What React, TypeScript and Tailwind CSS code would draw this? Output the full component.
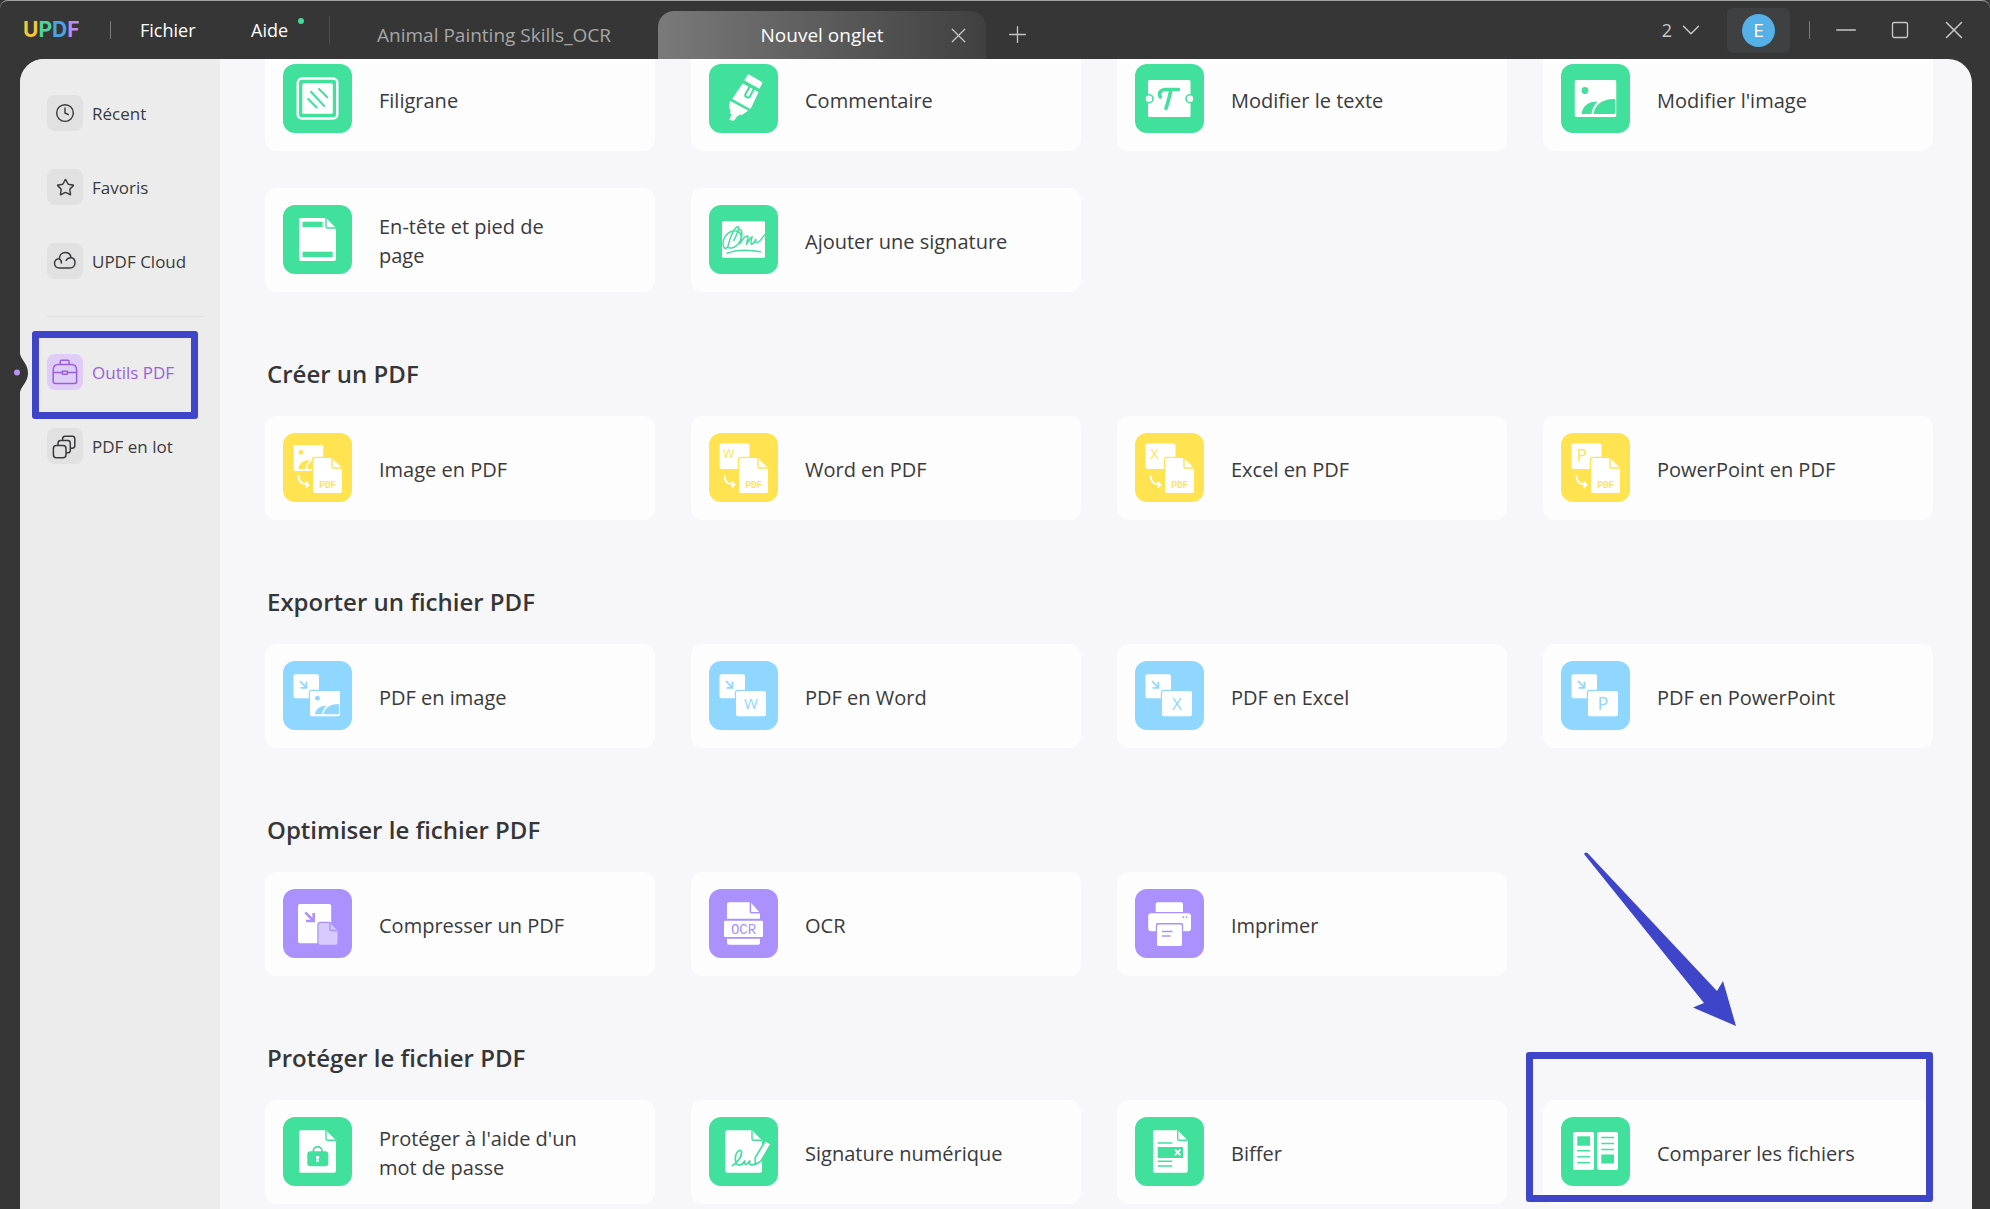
import { ReactNode } from "react";
import { ChevronDown, Clock, Minus, Plus, Square, Star, X } from "lucide-react";
import clsx from "clsx";

const GREEN = "#42e09d";
const YELLOW = "#ffe350";
const BLUE = "#90d7ff";
const PURPLE = "#ab91fd";

interface ITool {
  label: string;
  icon: ReactNode;
  highlighted?: boolean;
}

interface ISection {
  title?: string;
  tools: ITool[];
}

const Tile = ({ color, children }: { color: string; children: ReactNode }) => (
  <svg viewBox="0 0 69 69" className="size-[69px] shrink-0" aria-hidden="true">
    <rect width="69" height="69" rx="12" fill={color} />
    {children}
  </svg>
);

// sheet of paper with a folded top right corner
const Sheet = ({ x, y, w, h, fold, color, fill = "#fff", outline = false }: {
  x: number; y: number; w: number; h: number; fold: number; color: string; fill?: string; outline?: boolean;
}) => {
  const r = x + w;
  const b = y + h;
  return (
    <g strokeLinejoin="round">
      <path
        d={`M${x + 2} ${y}H${r - fold}L${r} ${y + fold}V${b - 2}Q${r} ${b} ${r - 2} ${b}H${x + 2}Q${x} ${b} ${x} ${b - 2}V${y + 2}Q${x} ${y} ${x + 2} ${y}Z`}
        fill={fill}
        stroke={outline ? color : "none"}
        strokeWidth="2.4"
        paintOrder="stroke"
      />
      <path
        d={`M${r - fold} ${y}V${y + fold - 1.5}Q${r - fold} ${y + fold} ${r - fold + 1.5} ${y + fold}H${r}`}
        fill="none"
        stroke={color}
        strokeWidth="1.4"
      />
    </g>
  );
};

const Picture = ({ x, y, w, h, color }: { x: number; y: number; w: number; h: number; color: string }) => (
  <svg x={x} y={y} width={w} height={h} viewBox="0 0 42 37" preserveAspectRatio="none">
    <rect width="42" height="37" rx="2" fill="#fff" />
    <circle cx="10.5" cy="10.5" r="3.4" fill={color} />
    <path d="M7 34C8 26 14 21.5 23 21.5C19.5 25 17.5 29 17 34Z" fill={color} />
    <path d="M19 34C20 25 28 18.5 40.5 19V33Q40.5 34 39.5 34Z" fill={color} />
  </svg>
);

const Letter = ({ x, y, size, color, children }: { x: number; y: number; size: number; color: string; children: string }) => (
  <text x={x} y={y} fontSize={size} fill={color} textAnchor="middle" className="font-['Open_Sans',sans-serif]">
    {children}
  </text>
);

const ToPdf = ({ children }: { children: ReactNode }) => (
  <Tile color={YELLOW}>
    {children}
    <Sheet x={30} y={25} w={29} h={35} fold={10} color={YELLOW} outline />
    <text x="44.5" y="55" fontSize="9" fontWeight="700" fill={YELLOW} textAnchor="middle" className="font-[Roboto,sans-serif]">
      PDF
    </text>
    <path d="M15.5 42.5C15.5 48 19 51.5 25 51.7M22.5 48.5L25.5 51.7L22.7 54.5" fill="none" stroke="#fff" strokeWidth="1.8" />
  </Tile>
);

const FromPdf = ({ children }: { children: ReactNode }) => (
  <Tile color={BLUE}>
    <rect x="10.5" y="13.3" width="25.5" height="24" rx="2" fill="#fff" />
    <path d="M17 20L23 26.4M23.4 20.8V26.8H17.6" fill="none" stroke={BLUE} strokeWidth="1.8" />
    <rect x="25.8" y="28.8" width="32.4" height="27.6" rx="3" fill={BLUE} />
    <rect x="27" y="30" width="30" height="25.3" rx="2" fill="#fff" />
    {children}
  </Tile>
);

const sections: ISection[] = [
  {
    tools: [
      {
        label: "Filigrane",
        icon: (
          <Tile color={GREEN}>
            <rect x="14.8" y="14.6" width="39.5" height="39.8" rx="4" fill="none" stroke="#fff" strokeWidth="2.5" />
            <rect x="19.3" y="19.3" width="30.5" height="30.5" rx="1.5" fill="#fff" />
            <path d="M28 27.8L41.2 42M36 25L44.2 33.3M25.2 35L33.7 43.5" stroke={GREEN} strokeWidth="2" strokeLinecap="round" />
          </Tile>
        ),
      },
      {
        label: "Commentaire",
        icon: (
          <Tile color={GREEN}>
            <g fill="#fff" stroke="#fff" strokeLinejoin="round">
              <path d="M39.5 10.7L53 18.5L50.3 24.2L35.8 16.2Z" />
              <path d="M33.8 20L49 28.3L41.3 44.5L23.8 34.7Z" />
              <path d="M21.3 37.5L38.5 46.7L32.5 50.7L30.8 50L27.5 52.6L21.5 49.3L22.2 45.8L20.7 44.6Z" />
              <path d="M22.9 51L27 53.3L24.6 56.3L20.8 55.5Z" />
            </g>
            <path d="M41.8 20.5L36.3 30.5C35.5 32.5 39.3 34.7 40.8 32.6L45.8 23.2" fill="none" stroke={GREEN} strokeWidth="2" />
          </Tile>
        ),
      },
      {
        label: "Modifier le texte",
        icon: (
          <Tile color={GREEN}>
            <rect x="13" y="16" width="42.5" height="37" rx="1.5" fill="#fff" />
            <circle cx="14" cy="34.7" r="4" fill="#fff" stroke={GREEN} strokeWidth="1.6" />
            <circle cx="55" cy="34.7" r="4" fill="#fff" stroke={GREEN} strokeWidth="1.6" />
            <path
              d="M25.3 33C23 28.5 26 25.5 31 25.5H43.5M35.8 26.5C34.5 33 33 38.5 31 44.3"
              fill="none"
              stroke={GREEN}
              strokeWidth="3.6"
              strokeLinecap="round"
            />
          </Tile>
        ),
      },
      {
        label: "Modifier l'image",
        icon: (
          <Tile color={GREEN}>
            <Picture x={13.5} y={16} w={42} h={37} color={GREEN} />
          </Tile>
        ),
      },
      {
        label: "En-tête et pied de page",
        icon: (
          <Tile color={GREEN}>
            <Sheet x={16} y={13} w={37} h={43} fold={10} color={GREEN} />
            <rect x="19.6" y="16.7" width="20" height="5.4" fill={GREEN} />
            <rect x="19.6" y="46.7" width="30" height="5.4" fill={GREEN} />
          </Tile>
        ),
      },
      {
        label: "Ajouter une signature",
        icon: (
          <Tile color={GREEN}>
            <rect x="13" y="16.3" width="43" height="36.5" rx="1.5" fill="#fff" />
            <path
              d="M24.5 36C27 31 29.5 27 29.5 22C26 20.5 21.5 31 19 41C16.5 46 13 42 14.3 36C16 29 23 24 29 26.5C35.5 30 31 39.5 24.5 42.5C21.5 43.5 19.5 43 18.5 42M30 24C34.5 25 33 32 30.7 39C33 35 36.5 30.5 38.8 31C40 32 37.5 36 37.8 38.8C39.5 36 41 33 43 32C42.5 35 41 38.5 42.5 39.2C45 39 46 36 47 34C46.5 36.5 46.5 38 48.5 37.6C51 37 53.5 32 56 29.5"
              fill="none"
              stroke={GREEN}
              strokeWidth="1.5"
            />
            <path d="M17.5 48.5C27 44.5 40 44.5 52 46.8" fill="none" stroke={GREEN} strokeWidth="1.5" />
          </Tile>
        ),
      },
    ],
  },
  {
    title: "Créer un PDF",
    tools: [
      {
        label: "Image en PDF",
        icon: (
          <ToPdf>
            <Picture x={10.5} y={12} w={30} h={26} color={YELLOW} />
          </ToPdf>
        ),
      },
      {
        label: "Word en PDF",
        icon: (
          <ToPdf>
            <rect x="10.5" y="10.4" width="30" height="25.6" rx="2" fill="#fff" />
            <Letter x={19.8} y={24.6} size={12} color={YELLOW}>W</Letter>
          </ToPdf>
        ),
      },
      {
        label: "Excel en PDF",
        icon: (
          <ToPdf>
            <rect x="10.5" y="10.4" width="30" height="25.6" rx="2" fill="#fff" />
            <Letter x={19.5} y={26.2} size={14} color={YELLOW}>X</Letter>
          </ToPdf>
        ),
      },
      {
        label: "PowerPoint en PDF",
        icon: (
          <ToPdf>
            <rect x="10.5" y="10.4" width="30" height="25.6" rx="2" fill="#fff" />
            <Letter x={20.8} y={27.6} size={17} color={YELLOW}>P</Letter>
          </ToPdf>
        ),
      },
    ],
  },
  {
    title: "Exporter un fichier PDF",
    tools: [
      {
        label: "PDF en image",
        icon: (
          <FromPdf>
            <Picture x={27} y={30} w={30} h={25.3} color={BLUE} />
          </FromPdf>
        ),
      },
      {
        label: "PDF en Word",
        icon: (
          <FromPdf>
            <Letter x={42} y={48.3} size={15} color={BLUE}>W</Letter>
          </FromPdf>
        ),
      },
      {
        label: "PDF en Excel",
        icon: (
          <FromPdf>
            <Letter x={42} y={48.6} size={17} color={BLUE}>X</Letter>
          </FromPdf>
        ),
      },
      {
        label: "PDF en PowerPoint",
        icon: (
          <FromPdf>
            <Letter x={42} y={49} size={18} color={BLUE}>P</Letter>
          </FromPdf>
        ),
      },
    ],
  },
  {
    title: "Optimiser le fichier PDF",
    tools: [
      {
        label: "Compresser un PDF",
        icon: (
          <Tile color={PURPLE}>
            <rect x="15" y="15" width="33.2" height="39.3" rx="2" fill="#fff" />
            <path d="M22.3 23.3L30.3 31.5M30.7 24V32H23" fill="none" stroke={PURPLE} strokeWidth="2.6" />
            <Sheet x={35.5} y={34} w={19} h={21.7} fold={7.5} color={PURPLE} fill="#d8caff" outline />
          </Tile>
        ),
      },
      {
        label: "OCR",
        icon: (
          <Tile color={PURPLE}>
            <path d="M20 13.3H41.4L51 23.7V29.7H18V15.3Q18 13.3 20 13.3Z" fill="#fff" />
            <path d="M41.4 13V22.5Q41.4 23.7 42.6 23.7H51.5" fill="none" stroke={PURPLE} strokeWidth="1.5" />
            <rect x="15" y="31.7" width="39" height="16.3" rx="1" fill="#fff" />
            <path d="M18 49.8H51V53.7Q51 55.7 49 55.7H20Q18 55.7 18 53.7Z" fill="#fff" />
            <text x="34.5" y="44.8" fontSize="14" fontWeight="500" fill={PURPLE} textAnchor="middle" className="font-['Liberation_Mono',monospace]">
              OCR
            </text>
          </Tile>
        ),
      },
      {
        label: "Imprimer",
        icon: (
          <Tile color={PURPLE}>
            <path d="M20.7 23V15.3Q20.7 13.3 22.7 13.3H46Q48 13.3 48 15.3V23Z" fill="#fff" />
            <rect x="13.2" y="24.2" width="42.8" height="18" rx="3" fill="#fff" />
            <circle cx="48.3" cy="28.2" r="0.9" fill={PURPLE} />
            <circle cx="51.5" cy="28.2" r="0.9" fill={PURPLE} />
            <rect x="20.8" y="34" width="27.4" height="24" rx="2" fill={PURPLE} />
            <rect x="22" y="35.4" width="25" height="21.6" rx="1.5" fill="#fff" />
            <path d="M27 42.4H37.5M27 47H35.5" stroke={PURPLE} strokeWidth="1.5" />
          </Tile>
        ),
      },
    ],
  },
  {
    title: "Protéger le fichier PDF",
    tools: [
      {
        label: "Protéger à l'aide d'un mot de passe",
        icon: (
          <Tile color={GREEN}>
            <Sheet x={16} y={13.3} w={37} h={42.4} fold={10} color={GREEN} />
            <path d="M30.3 35V33.5A4.3 3.6 0 0 1 38.9 33.5V35" fill="none" stroke={GREEN} strokeWidth="1.7" />
            <rect x="24.3" y="34.3" width="21" height="15" rx="3" fill={GREEN} />
            <path d="M33 39H36.2V41L35.4 42.3L36.2 45H33L33.8 42.3L33 41Z" fill="#fff" />
          </Tile>
        ),
      },
      {
        label: "Signature numérique",
        icon: (
          <Tile color={GREEN}>
            <Sheet x={16.4} y={13.3} w={36.6} h={42.4} fold={10} color={GREEN} />
            <path d="M56.5 23.5L62 27L52 44L46.5 47.5L46 41Z" fill="#fff" stroke={GREEN} strokeWidth="1.6" strokeLinejoin="round" />
            <path
              d="M23.5 48.5C28.5 46 33 39 32.5 35C31 30.5 25.5 36 26.5 43C27 50 33 49.5 36 43.5C34.5 48.5 37.5 49 41 43.5C39.5 48 42 49.5 46.5 46.5"
              fill="none"
              stroke={GREEN}
              strokeWidth="1.7"
              strokeLinecap="round"
            />
          </Tile>
        ),
      },
      {
        label: "Biffer",
        icon: (
          <Tile color={GREEN}>
            <Sheet x={18} y={13.3} w={34.7} h={42.4} fold={10} color={GREEN} />
            <path d="M22.7 26H37.3M22.7 44.3H37.3M22.7 49H37.3" stroke={GREEN} strokeWidth="1.5" />
            <rect x="22.7" y="30" width="25.3" height="11" fill={GREEN} />
            <path d="M40 32.7L45.4 38.1M45.4 32.7L40 38.1" stroke="#fff" strokeWidth="1.8" />
          </Tile>
        ),
      },
      {
        label: "Comparer les fichiers",
        highlighted: true,
        icon: (
          <Tile color={GREEN}>
            <rect x="12" y="15" width="21" height="38" rx="2" fill="#fff" />
            <rect x="36.3" y="15" width="20.7" height="38" rx="2" fill="#fff" />
            <rect x="16.3" y="19.3" width="12.7" height="9.4" fill={GREEN} />
            <rect x="40.3" y="37.5" width="12.7" height="9" fill={GREEN} />
            <path
              d="M16.3 33.7H29M16.3 39.7H29M16.3 45.7H29M40.3 20.4H53M40.3 26.4H53M40.3 32.4H53"
              stroke={GREEN}
              strokeWidth="1.5"
            />
          </Tile>
        ),
      },
    ],
  },
];

const CloudIcon = () => (
  <svg viewBox="0 0 36 36" className="size-9" fill="none" stroke="currentColor" strokeWidth="1.5" strokeLinecap="round">
    <path d="M12.3 25C9 25 7.5 22.5 7.5 20.3C7.5 17.5 9.5 15.6 12.3 15.8C12.5 12 15 9.6 18.3 9.6C21.3 9.6 23.6 11.8 24 14.6C26.5 15 28 17.2 28 19.8C28 22.8 26 25 23.2 25Z" />
    <path d="M12.3 15.8C13.8 16.6 14.6 18 14.4 20M24 14.8C21.8 14.8 20 15.8 19.2 17.3" />
  </svg>
);

const ToolboxIcon = () => (
  <svg viewBox="0 0 36 36" className="size-9" fill="none" stroke="currentColor" strokeWidth="1.5" strokeLinejoin="round">
    <path d="M13.2 10.4V7.6Q13.2 6.3 14.5 6.3H20.8Q22.1 6.3 22.1 7.6V10.4" />
    <path d="M11.5 10.6H24.2Q29.6 10.6 29.6 16V27.4Q29.6 29.4 27.6 29.4H8.2Q6.2 29.4 6.2 27.4V16Q6.2 10.6 11.5 10.6Z" />
    <path d="M6.2 18.4H15.4M20.4 18.4H29.6M15.4 17.2H20.4V20.2H15.4Z" />
  </svg>
);

const StackIcon = () => (
  <svg viewBox="0 0 36 36" className="size-9" fill="none" stroke="currentColor" strokeWidth="1.5">
    <rect x="6.4" y="17.4" width="12.6" height="12.4" rx="3" />
    <path d="M11 17V15.2Q11 12.6 13.6 12.6H20.7Q23.3 12.6 23.3 15.2V22.2Q23.3 24.8 20.7 24.8H19" />
    <path d="M15.6 12.4V10.8Q15.6 8.2 18.2 8.2H25.2Q27.8 8.2 27.8 10.8V17.6Q27.8 20.2 25.2 20.2H23.5" />
  </svg>
);

const NavItem = ({ label, icon, active = false }: { label: string; icon: ReactNode; active?: boolean }) => (
  <button type="button" className={clsx("relative flex items-center gap-[9px] text-left text-[17px]", active ? "text-[#9a5fdc]" : "text-[#3a3a3c]")}>
    <span className={clsx("flex size-9 shrink-0 items-center justify-center rounded-lg", active ? "bg-[#e0cdf7]" : "bg-[#e1e1e2]")}>
      {icon}
    </span>
    <span className="pt-0.5">{label}</span>
    {active && (
      <>
        <svg viewBox="0 0 16 38" className="absolute top-0 -left-[34px] h-[38px] w-4" aria-hidden="true">
          <path d="M7 0C9 7 15 10 15 19C15 28 9 31 7 38Z" fill="#363636" />
          <circle cx="4" cy="18.5" r="3" fill="#b795f5" />
        </svg>
        <span className="absolute -top-[23px] -left-[15px] h-[88px] w-[166px] rounded-[3px] border-7 border-[#3f45c8]" />
      </>
    )}
  </button>
);

const ToolCard = ({ label, icon, highlighted }: ITool) => (
  <button
    type="button"
    className="relative flex h-[104px] w-full items-center gap-[27px] rounded-xl bg-[#fdfdfe] px-[18px] pb-0.5 text-left text-xl leading-[29px] text-[#3a3a3c]"
  >
    {icon}
    <span className="max-w-[204px] pt-1">{label}</span>
    {highlighted && (
      <>
        <span className="absolute -top-12 right-0 bottom-0.5 -left-[17px] rounded-[3px] border-7 border-[#3f45c8]" />
        <svg viewBox="0 0 152 174" className="absolute bottom-[178px] left-[41px] h-[174px] w-[152px]" aria-hidden="true">
          <path d="M0 2Q1 -0.5 3.5 1L133 139L139 129L152 174L109 155.5L120 151Z" fill="#3f45c8" />
        </svg>
      </>
    )}
  </button>
);

const TitleBar = () => (
  <header className="flex h-[59px] shrink-0 rounded-t-lg border-t border-[#a0a3a2] text-[18px] text-white">
    <div className="flex items-center">
      <h1 className="w-[110px] pl-[23px] font-[Inter,sans-serif] text-[21px] font-bold">
        <span className="text-[#f6c833]">U</span>
        <span className="text-[#4fd39c]">P</span>
        <span className="text-[#4aa3e6]">D</span>
        <span className="text-[#bd8cf2]">F</span>
      </h1>
      <span className="h-[18px] w-px bg-[#7a7a7a]" />
      <button type="button" className="w-[111px] pl-[29px] text-left">Fichier</button>
      <button type="button" className="w-[107px] pl-[29px] text-left">
        <span className="relative">
          Aide
          <span className="absolute top-0 -right-4 size-1.5 rounded-full bg-[#45d99b]" />
        </span>
      </button>
      <span className="h-7 w-px bg-[#4a4a4a]" />
    </div>

    <div className="flex pt-2.5 text-[19px]">
      <button type="button" className="w-[328px] text-center text-[#a6a6a6]">Animal Painting Skills_OCR</button>
      <div className="relative flex w-[328px] items-center justify-center rounded-t-2xl bg-linear-to-r from-[#7a7a7a] to-[#404040]">
        <button type="button">Nouvel onglet</button>
        <button type="button" aria-label="Fermer l'onglet" className="absolute right-[15px] text-[#c4c4c4]">
          <X size={25} strokeWidth={1.3} />
        </button>
      </div>
      <button type="button" aria-label="Ajouter un onglet" className="ml-[18px] pb-0.5 text-[#c4c4c4]">
        <Plus size={27} strokeWidth={1.2} />
      </button>
    </div>

    <div className="ml-auto flex items-center pr-[9px] text-[#c8c8c8]">
      <button type="button" className="mr-[21px] flex items-center gap-1">
        2
        <ChevronDown size={30} strokeWidth={1.2} />
      </button>
      <button type="button" aria-label="Compte" className="flex h-[45px] w-[63px] items-center justify-center rounded-md bg-[#3f4041]">
        <span className="flex size-[33px] items-center justify-center rounded-full bg-[#54b0e6] text-[19px] text-white">E</span>
      </button>
      <span className="mr-[9px] ml-[19px] h-[18px] w-px bg-[#7a7a7a]" />
      <button type="button" aria-label="Réduire" className="flex w-[54px] justify-center">
        <Minus size={32} strokeWidth={1} />
      </button>
      <button type="button" aria-label="Agrandir" className="flex w-[54px] justify-center">
        <Square size={20} strokeWidth={1.6} />
      </button>
      <button type="button" aria-label="Fermer" className="flex w-[54px] justify-center">
        <X size={30} strokeWidth={1.2} />
      </button>
    </div>
  </header>
);

const App = () => {
  return (
    <div className="flex h-screen flex-col overflow-hidden bg-[#363636] font-['Open_Sans',sans-serif]">
      <TitleBar />

      <div className="mr-[18px] ml-5 flex min-h-0 flex-1 rounded-t-3xl bg-[#f7f7f9]">
        <nav className="flex w-[200px] shrink-0 flex-col gap-[38px] rounded-tl-3xl bg-[#ececed] px-[27px] pt-9">
          <NavItem label="Récent" icon={<Clock size={20} strokeWidth={1.7} />} />
          <NavItem label="Favoris" icon={<Star size={19} strokeWidth={1.8} />} />
          <NavItem label="UPDF Cloud" icon={<CloudIcon />} />
          <hr className="-my-px -mr-2.5 border-[#e0e0e1]" />
          <NavItem label="Outils PDF" icon={<ToolboxIcon />} active />
          <NavItem label="PDF en lot" icon={<StackIcon />} />
        </nav>

        <main className="min-w-0 flex-1 overflow-hidden rounded-tr-3xl pr-[39px] pl-[45px]">
          <div className="-mt-3 flex flex-col gap-[62px]">
            {sections.map((section) => (
              <section key={section.tools[0].label}>
                {section.title && (
                  <h2 className="mb-[22px] pl-0.5 text-2xl leading-10 font-semibold text-[#363638]">{section.title}</h2>
                )}
                <div className="grid grid-cols-4 gap-x-9 gap-y-[37px]">
                  {section.tools.map((tool) => (
                    <ToolCard key={tool.label} {...tool} />
                  ))}
                </div>
              </section>
            ))}
          </div>
        </main>
      </div>
    </div>
  );
};

export default App;
